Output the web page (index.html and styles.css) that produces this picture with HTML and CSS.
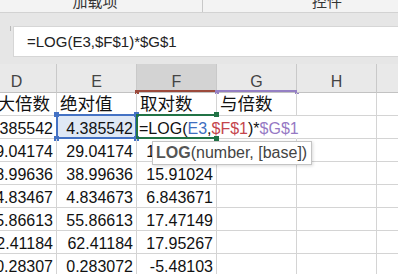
FILE: index.html
```html
<!DOCTYPE html>
<html lang="zh">
<head>
    <meta charset="UTF-8">
    <meta name="viewport" content="width=device-width, initial-scale=1.0">
    <title>LOG</title>
    <link rel="stylesheet" href="styles.css">
</head>
<body>

    <div class="ribbon">
        <div class="group first"><span>加载项</span></div>
        <div class="group"><span class="second">控件</span></div>
    </div>

    <div class="fbar">
        <div class="fbox">=LOG(E3,$F$1)*$G$1</div>
    </div>

    <div class="sheet">
        <!-- column headers -->
        <div class="hd">D</div>
        <div class="hd">E</div>
        <div class="hd active ref-red">F</div>
        <div class="hd ref-purple">G</div>
        <div class="hd">H</div>
        <div class="hd"></div>

        <!-- row 2 -->
        <div class="c txt">放大倍数</div>
        <div class="c txt">绝对值</div>
        <div class="c txt">取对数</div>
        <div class="c txt">与倍数</div>
        <div class="c"></div>
        <div class="c"></div>

        <!-- row 3 -->
        <div class="c num">4.385542</div>
        <div class="c num sel">4.385542<span class="frame"></span><span class="dot tl"></span><span class="dot tr"></span><span class="dot bl"></span><span class="dot br"></span></div>
        <div class="c edit">=LOG(<span class="r-blue">E3</span>,<span class="r-red">$F$1</span>)*<span class="r-purple">$G$1</span><span class="frame"></span><span class="dot tr"></span><span class="dot br"></span></div>
        <div class="c open"></div>
        <div class="c"></div>
        <div class="c"></div>

        <div class="c num">29.04174</div>
        <div class="c num">29.04174</div>
        <div class="c num">14.61033</div>
        <div class="c"></div>
        <div class="c"></div>
        <div class="c"></div>

        <div class="c num">38.99636</div>
        <div class="c num">38.99636</div>
        <div class="c num">15.91024</div>
        <div class="c"></div>
        <div class="c"></div>
        <div class="c"></div>

        <div class="c num">14.83467</div>
        <div class="c num">4.834673</div>
        <div class="c num">6.843671</div>
        <div class="c"></div>
        <div class="c"></div>
        <div class="c"></div>

        <div class="c num">55.86613</div>
        <div class="c num">55.86613</div>
        <div class="c num">17.47149</div>
        <div class="c"></div>
        <div class="c"></div>
        <div class="c"></div>

        <div class="c num">62.41184</div>
        <div class="c num">62.41184</div>
        <div class="c num">17.95267</div>
        <div class="c"></div>
        <div class="c"></div>
        <div class="c"></div>

        <div class="c num">10.28307</div>
        <div class="c num">0.283072</div>
        <div class="c num">-5.48103</div>
        <div class="c"></div>
        <div class="c"></div>
        <div class="c"></div>
    </div>

    <div class="tip"><b>LOG</b>(number, [base])</div>

</body>
</html>
```

FILE: styles.css
```css
body {
    font-family: "Liberation Sans", "Noto Sans CJK SC", sans-serif;
    background-color: #e6e6e6;
    margin: 0;
    padding: 0;
    width: 398px;
    height: 274px;
    overflow: hidden;
    position: relative;
}

.ribbon {
    display: flex;
    height: 12px;
    background-color: #f3f3f3;
    border-bottom: 1px solid #d2d2d2;
    overflow: hidden;
    font-family: "Noto Sans CJK SC", sans-serif;
    font-size: 15px;
    line-height: 15px;
    color: #333;
}

.ribbon .group {
    margin-top: -7px;
}

.ribbon .first {
    width: 190px;
    padding-right: 12px;
    border-right: 1px solid #c8c8c8;
    text-align: center;
}

.ribbon .second {
    display: block;
    padding-left: 109px;
}

.fbar {
    height: 51px;
    box-sizing: border-box;
    padding: 13px 0 7px 13px;
    position: relative;
}

.fbar::before {
    content: "";
    position: absolute;
    left: 10px;
    top: 13px;
    width: 1px;
    height: 5px;
    background-color: #b8b8b8;
}

.fbox {
    height: 31px;
    box-sizing: border-box;
    background-color: #ffffff;
    border: 1px solid #d6d6d6;
    border-right: none;
    padding-left: 13px;
    font-size: 15px;
    line-height: 29px;
    color: #222;
}

.sheet {
    display: grid;
    grid-template-columns: repeat(6, 80px);
    grid-template-rows: 29px repeat(8, 23px);
    margin-left: -23px;
    background-color: #ffffff;
}

.hd {
    box-sizing: border-box;
    background-color: #e9e9e9;
    border-right: 1px solid #c9c9c9;
    border-bottom: 1px solid #c2c2c2;
    text-align: center;
    font-size: 16px;
    line-height: 20px;
    padding-top: 8px;
    color: #444;
    position: relative;
}

.hd.active {
    background-color: #d3d3d3;
}

.hd.ref-red {
    box-shadow: inset 0 -2px 0 #9c4a3c;
}

.hd.ref-purple {
    box-shadow: inset 0 -2px 0 #9580c4;
}

.hd.ref-red::after,
.hd.ref-purple::after {
    content: "";
    position: absolute;
    left: -2px;
    bottom: -2px;
    width: 4px;
    height: 4px;
    background-color: #9c4a3c;
}

.hd.ref-purple::after {
    background-color: #9580c4;
}

.hd.ref-purple::before {
    content: "";
    position: absolute;
    right: -3px;
    bottom: -2px;
    width: 4px;
    height: 4px;
    background-color: #9580c4;
}

.c {
    box-sizing: border-box;
    border-right: 1px solid #d4d4d4;
    border-bottom: 1px solid #d4d4d4;
    font-size: 16px;
    line-height: 19px;
    padding: 3px 3px 0 3px;
    color: #111;
    white-space: nowrap;
    position: relative;
}

.num {
    text-align: right;
}

.txt {
    font-family: "Noto Sans CJK SC", sans-serif;
    font-size: 17.5px;
    line-height: 20px;
    padding-top: 0;
}

.sel {
    background-color: #dfe8f5;
}

.frame {
    position: absolute;
    left: -1px;
    top: -2px;
    right: -1px;
    bottom: -1px;
    border: 2px solid #4472c4;
}

.dot {
    position: absolute;
    width: 5px;
    height: 5px;
    background-color: #4472c4;
}

.dot.tl { left: -3px; top: -4px; }
.dot.tr { right: -3px; top: -4px; }
.dot.bl { left: -3px; bottom: -3px; }
.dot.br { right: -3px; bottom: -3px; }

.edit {
    border-right-color: transparent;
    overflow: visible;
    z-index: 1;
    padding-left: 2px;
}

.edit .frame {
    border-color: #217346;
    border-right: none;
    right: 0;
}

.edit .dot {
    background-color: #217346;
}

.open {
    border-right-color: transparent;
}

.r-blue {
    color: #3f6fbf;
}

.r-red {
    color: #c4454d;
}

.r-purple {
    color: #9679c4;
}

.tip {
    position: absolute;
    left: 152px;
    top: 141px;
    height: 24px;
    box-sizing: border-box;
    padding: 0 4px 0 3px;
    background-color: #ffffff;
    border: 1px solid #c4c4c4;
    box-shadow: 1px 1px 3px rgba(0, 0, 0, 0.15);
    font-size: 16px;
    line-height: 22px;
    color: #444;
    z-index: 2;
}

.tip b {
    color: #555;
}
```
